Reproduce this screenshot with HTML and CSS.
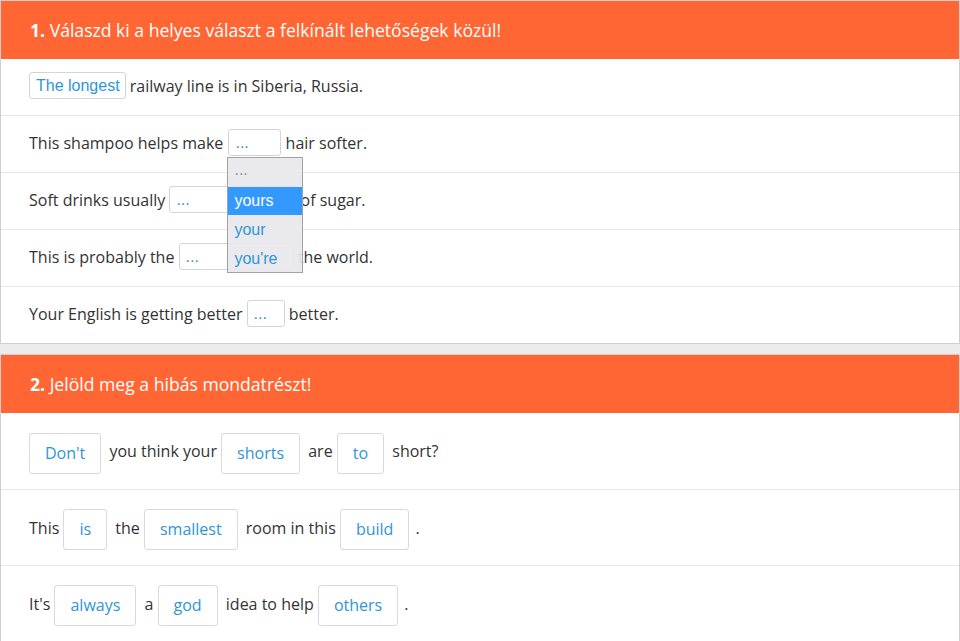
FILE: index.html
```html
<!DOCTYPE html>
<html lang="hu">
<head>
<meta charset="utf-8">
<title>Feladatok</title>
<link rel="stylesheet" href="styles.css">
</head>
<body>
<section class="card">
  <h2 class="card-head"><span><b>1.</b> Válaszd ki a helyes választ a felkínált lehetőségek közül!</span></h2>
  <div class="row"><p><span class="pick">The longest</span> railway line is in Siberia, Russia.</p></div>
  <div class="row">
    <p>This shampoo helps make <span class="pick-wrap"><span class="pick w-53">...</span><span class="menu">
      <span class="opt opt-empty">...</span>
      <span class="opt opt-active">yours</span>
      <span class="opt">your</span>
      <span class="opt">you're</span>
    </span></span> hair softer.</p>
  </div>
  <div class="row"><p>Soft drinks usually <span class="pick w-127">...</span> of sugar.</p></div>
  <div class="row"><p>This is probably the <span class="pick w-115">...</span> the world.</p></div>
  <div class="row"><p>Your English is getting better <span class="pick w-38">...</span> better.</p></div>
</section>

<section class="card">
  <h2 class="card-head"><span><b>2.</b> Jelöld meg a hibás mondatrészt!</span></h2>
  <div class="row row-tall"><p><span class="word">Don't</span> you think your <span class="word">shorts</span> are <span class="word">to</span> short?</p></div>
  <div class="row row-tall"><p>This <span class="word">is</span> the <span class="word">smallest</span> room in this <span class="word">build</span><span class="stop">.</span></p></div>
  <div class="row row-tall"><p>It's <span class="word">always</span> a <span class="word">god</span> idea to help <span class="word">others</span><span class="stop">.</span></p></div>
</section>
</body>
</html>
```

FILE: styles.css
```css
* { box-sizing: border-box; }

html, body {
  margin: 0;
  background: #ebebeb;
}

body {
  font-family: "Open Sans", "Liberation Sans", sans-serif;
  font-size: 16px;
  color: #333;
}

.card {
  background: #fff;
  border: 1px solid #cfcfcf;
  margin-bottom: 10px;
}

.card-head {
  margin: 0;
  height: 58px;
  display: flex;
  align-items: center;
  padding: 0 29px 1px;
  background: #ff6633;
  color: #fff;
  font-size: 17.6px;
  font-weight: 400;
}

.card-head b { font-weight: 700; }

.row {
  height: 57px;
  display: flex;
  align-items: center;
  padding: 0 28px 2px;
  border-top: 1px solid #e8e8e8;
}

.card-head + .row { border-top: 0; height: 56px; }

.row p { margin: 0; line-height: 27px; }

.row-tall { height: 76px; padding-bottom: 0; padding-top: 3px; }
.card-head + .row-tall { height: 76px; }
.row-tall p { line-height: 41px; }

/* dropdown-style answer fields */
.pick {
  display: inline-block;
  vertical-align: middle;
  white-space: nowrap;
  height: 27px;
  line-height: 25px;
  padding: 0 5px 0 6px;
  border: 1px solid #d4d4d4;
  border-radius: 3px;
  font-family: "Liberation Sans", Arial, sans-serif;
  font-size: 16px;
  color: #2f95d8;
  background: #fff;
  margin-top: -3px;
}

.w-53 { width: 53px; }
.w-127 { width: 127px; }
.w-115 { width: 115px; }
.w-38 { width: 38px; }

.pick-wrap { position: relative; display: inline-block; vertical-align: middle; height: 27px; margin-top: -3px; margin-left: 1px; }
.pick-wrap .pick { margin-top: 0; vertical-align: top; }

.menu {
  position: absolute;
  left: -1px;
  top: 28px;
  width: 76px;
  border: 1px solid #a2a2a2;
  background: rgba(232, 232, 237, 0.93);
  display: flex;
  flex-direction: column;
  z-index: 2;
  font-family: "Liberation Sans", Arial, sans-serif;
}

.opt {
  display: block;
  height: 28.5px;
  line-height: 30px;
  padding-left: 6px;
  color: #2f95d8;
  font-size: 16px;
}

.opt-empty { color: #9a8f86; height: 29px; line-height: 24px; }
.opt-active { background: #3399ff; color: #fff; height: 28px; line-height: 28px; }

/* clickable sentence parts */
.word {
  display: inline-block;
  vertical-align: middle;
  height: 41px;
  line-height: 39px;
  padding: 0 15px;
  margin-right: 4px;
  border: 1px solid #d9d9d9;
  border-radius: 3px;
  color: #2f95d8;
}

.stop { margin-left: 2px; }
```
